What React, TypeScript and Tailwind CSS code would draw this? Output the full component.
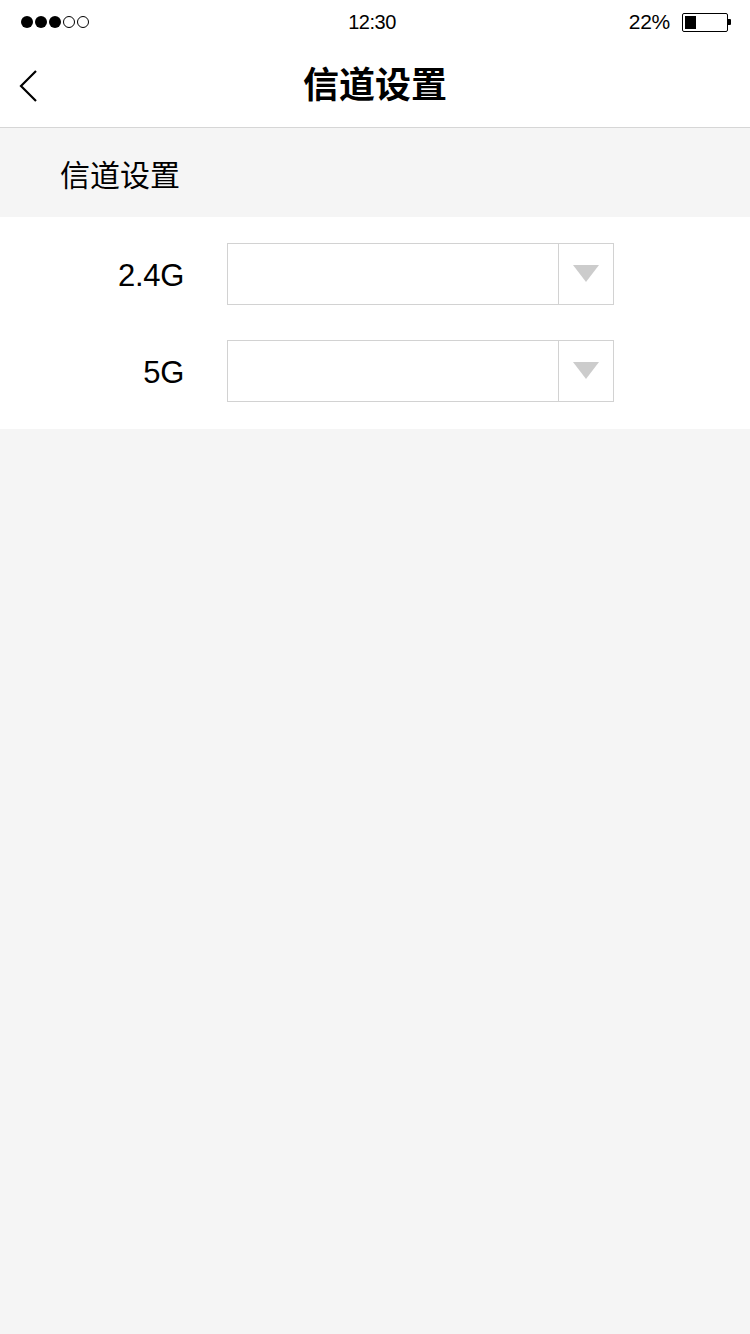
import { ReactNode } from 'react'

const FONT = { fontFamily: '"Helvetica Neue", "Liberation Sans", "Noto Sans CJK SC", sans-serif' }

function StatusBar() {
  return (
    <div className="relative h-[44px] flex items-center justify-between pl-[21px] pr-[19px] text-[20px] text-black">
      <div className="flex items-center gap-[2px]">
        {[0, 1, 2].map((i) => (
          <span key={i} className="w-[12px] h-[12px] rounded-full bg-black" />
        ))}
        {[0, 1].map((i) => (
          <span key={i} className="w-[12px] h-[12px] rounded-full border border-black" />
        ))}
      </div>
      <span className="absolute left-1/2 -translate-x-1/2 -ml-[3px] tracking-[-0.5px]">12:30</span>
      <div className="flex items-center gap-[12px]">
        <span className="text-[21px] tracking-[-0.3px]">22%</span>
        <div className="flex items-center">
          <div className="w-[46px] h-[19px] border border-black rounded-[2px] p-[2px]">
            <div className="w-[11px] h-full bg-black" />
          </div>
          <div className="w-[3px] h-[6px] bg-black rounded-r-[1px]" />
        </div>
      </div>
    </div>
  )
}

function NavBar() {
  return (
    <div className="relative h-[84px] flex items-center justify-center border-b border-[#d6d6d6] bg-white">
      <button className="absolute left-[18px] top-[25px]">
        <svg width="22" height="34" viewBox="0 0 22 34" fill="none">
          <path d="M18 2 L3 17 L18 32" stroke="#000" strokeWidth="2.2" />
        </svg>
      </button>
      <h1 className="text-[36px] font-bold text-black leading-none">信道设置</h1>
    </div>
  )
}

function Select() {
  return (
    <div className="w-[387px] h-[62px] border border-[#d2d2d2] bg-white flex">
      <div className="flex-1" />
      <div className="w-[55px] border-l border-[#d2d2d2] flex items-center justify-center">
        <svg width="26" height="18" viewBox="0 0 26 18">
          <path d="M0 0 H26 L13 17 Z" fill="#cccccc" />
        </svg>
      </div>
    </div>
  )
}

function Row({ label, children }: { label: string; children: ReactNode }) {
  return (
    <div className="flex items-center">
      <span className="w-[184px] pt-[5px] text-right text-[31px] text-black tracking-[-0.3px]">{label}</span>
      <div className="ml-[43px]">{children}</div>
    </div>
  )
}

export default function App() {
  return (
    <div className="w-[750px] min-h-[1334px] bg-[#f5f5f5]" style={FONT}>
      <div className="bg-white">
        <StatusBar />
        <NavBar />
      </div>

      <div className="h-[89px] flex items-center pl-[60px] pt-[6px]">
        <span className="text-[30px] text-black">信道设置</span>
      </div>

      <div className="bg-white pt-[26px] pb-[27px] flex flex-col gap-[35px]">
        <Row label="2.4G">
          <Select />
        </Row>
        <Row label="5G">
          <Select />
        </Row>
      </div>
    </div>
  )
}
